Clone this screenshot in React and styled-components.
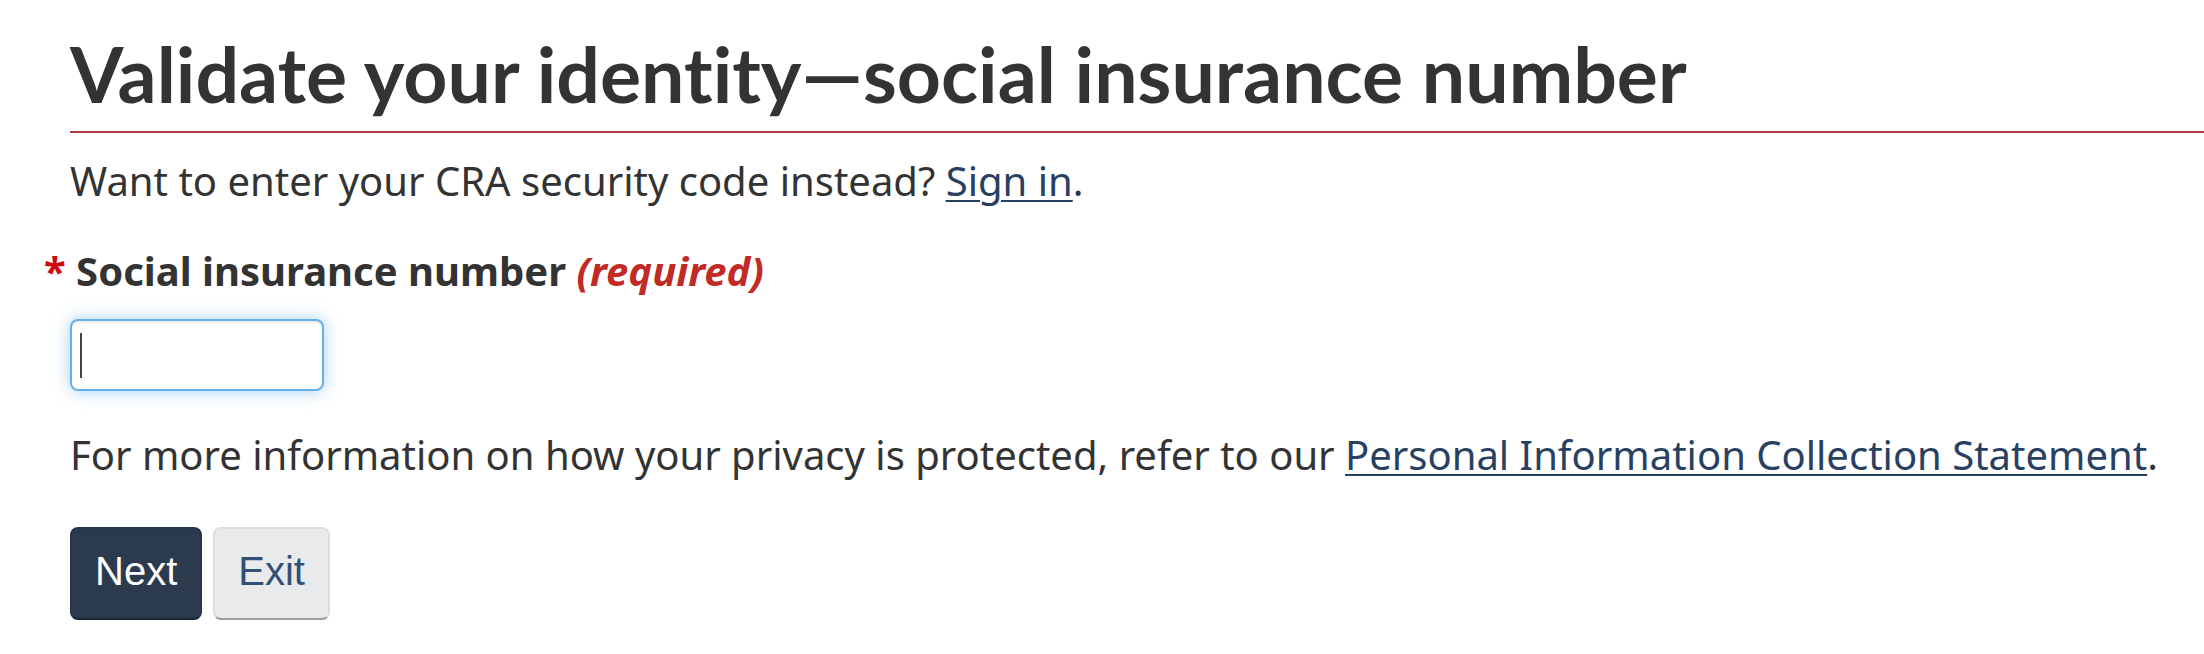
import React from 'react';
import styled, { createGlobalStyle } from 'styled-components';

const GlobalStyle = createGlobalStyle`
  html, body {
    margin: 0;
    padding: 0;
    background: #fff;
  }
  body {
    font-family: "Noto Sans", "DejaVu Sans", sans-serif;
    color: #333;
  }
`;

const Page = styled.main`
  padding: 0 0 40px 70px;
`;

const Title = styled.h1`
  margin: 30px 0 0;
  padding-bottom: 15px;
  border-bottom: 2px solid #af3c43;
  font-family: Lato, "Liberation Sans", sans-serif;
  font-weight: 700;
  font-size: 77px;
  line-height: 86px;
  font-variant-ligatures: none;
  color: #333;
`;

const Text = styled.p`
  margin: ${(p) => p.$top || 0}px 0 0;
  font-size: 40px;
  line-height: 56px;
  color: #333;
`;

const Link = styled.a`
  color: #284162;
  text-decoration: underline;
  text-decoration-thickness: 2px;
  text-underline-offset: 4px;
`;

const Label = styled.label`
  display: block;
  margin: 34px 0 0 -26px;
  font-size: 40px;
  line-height: 56px;
  font-weight: 700;
  color: #333;
`;

const Star = styled.span`
  color: #d3080c;
`;

const Required = styled.em`
  color: #c12a25;
  font-style: italic;
`;

const Field = styled.div`
  position: relative;
  width: 254px;
  margin-top: 20px;
`;

const Input = styled.input`
  display: block;
  box-sizing: border-box;
  width: 254px;
  height: 72px;
  border: 2px solid #66afe9;
  border-radius: 8px;
  outline: none;
  padding: 0 12px;
  font-size: 40px;
  font-family: inherit;
  color: #333;
  box-shadow: inset 0 2px 2px rgba(0, 0, 0, 0.075), 0 0 16px rgba(102, 175, 233, 0.6);
`;

const Caret = styled.span`
  position: absolute;
  left: 10px;
  top: 14px;
  width: 2px;
  height: 45px;
  background: #444;
`;

const Actions = styled.div`
  display: flex;
  gap: 11px;
  margin-top: 44px;
`;

const Button = styled.button`
  box-sizing: border-box;
  height: 93px;
  padding: 0 23px 4px;
  border-radius: 8px;
  font-family: "Liberation Sans", Arial, sans-serif;
  font-size: 40px;
  cursor: pointer;
  color: ${(p) => (p.$primary ? '#fff' : '#335075')};
  background: ${(p) => (p.$primary ? '#2b3a4c' : '#e9eaec')};
  border: 2px solid ${(p) => (p.$primary ? '#26374a' : '#dcdee1')};
  border-bottom-color: ${(p) => (p.$primary ? '#1b2634' : '#9c9ea1')};
`;

export default function App() {
  return (
    <>
      <GlobalStyle />
      <Page>
        <Title>Validate your identity—social insurance number</Title>
        <Text $top={20}>
          Want to enter your CRA security code instead? <Link href="#">Sign in</Link>.
        </Text>
        <Label htmlFor="sin">
          <Star>*</Star> Social insurance number <Required>(required)</Required>
        </Label>
        <Field>
          <Input id="sin" type="text" />
          <Caret />
        </Field>
        <Text $top={36}>
          For more information on how your privacy is protected, refer to our{' '}
          <Link href="#">Personal Information Collection Statement</Link>.
        </Text>
        <Actions>
          <Button $primary>Next</Button>
          <Button>Exit</Button>
        </Actions>
      </Page>
    </>
  );
}
